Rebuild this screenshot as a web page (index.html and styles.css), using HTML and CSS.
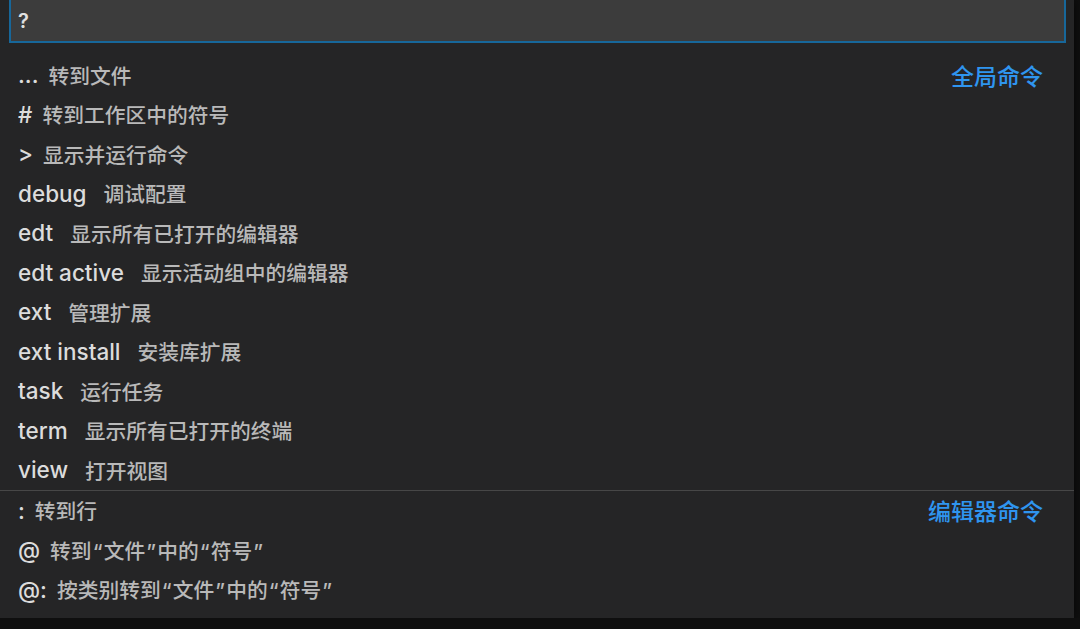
FILE: index.html
```html
<!DOCTYPE html>
<html>
<head>
  <meta charset="UTF-8">
  <link rel="stylesheet" href="styles.css">
</head>
<body>
  <div class="quick-open">
    <div class="input-box">?</div>

    <div class="group">
      <div class="row">
        <span class="label sym">...</span><span class="desc">转到文件</span>
        <span class="group-name">全局命令</span>
      </div>
      <div class="row"><span class="label sym">#</span><span class="desc">转到工作区中的符号</span></div>
      <div class="row"><span class="label sym">&gt;</span><span class="desc">显示并运行命令</span></div>
      <div class="row"><span class="label">debug</span><span class="desc">调试配置</span></div>
      <div class="row"><span class="label">edt</span><span class="desc">显示所有已打开的编辑器</span></div>
      <div class="row"><span class="label">edt active</span><span class="desc">显示活动组中的编辑器</span></div>
      <div class="row"><span class="label">ext</span><span class="desc">管理扩展</span></div>
      <div class="row"><span class="label">ext install</span><span class="desc">安装库扩展</span></div>
      <div class="row"><span class="label">task</span><span class="desc">运行任务</span></div>
      <div class="row"><span class="label">term</span><span class="desc">显示所有已打开的终端</span></div>
      <div class="row"><span class="label">view</span><span class="desc">打开视图</span></div>
    </div>

    <div class="group separated">
      <div class="row">
        <span class="label sym">:</span><span class="desc">转到行</span>
        <span class="group-name">编辑器命令</span>
      </div>
      <div class="row"><span class="label sym">@</span><span class="desc">转到<span class="q">“</span>文件<span class="q">”</span>中的<span class="q">“</span>符号<span class="q">”</span></span></div>
      <div class="row"><span class="label sym">@:</span><span class="desc">按类别转到<span class="q">“</span>文件<span class="q">”</span>中的<span class="q">“</span>符号<span class="q">”</span></span></div>
    </div>
  </div>
</body>
</html>
```

FILE: styles.css
```css
* {
  margin: 0;
  padding: 0;
  box-sizing: border-box;
}

body {
  background: #0f0f0f;
  font-family: Inter, "Noto Sans CJK SC", sans-serif;
  overflow: hidden;
}

.quick-open {
  width: 1074px;
  height: 618px;
  background: #252526;
  box-shadow: 0 0 8px rgba(0, 0, 0, 0.6);
  padding-bottom: 9px;
}

.input-box {
  margin-left: 9px;
  width: 1057px;
  height: 43px;
  background: #3c3c3c;
  border: 2px solid #17679a;
  border-top: none;
  color: #e0e0e0;
  font-size: 20px;
  font-weight: 600;
  padding: 9px 0 0 7px;
}

.group {
  padding-top: 12px;
}

.group.separated {
  margin-top: 0;
  padding-top: 0;
  border-top: 1px solid #474747;
}

.row {
  display: flex;
  align-items: center;
  height: 39.5px;
  padding: 0 31px 0 18px;
}

.label {
  color: #dcdcdc;
  font-size: 22.5px;
  font-weight: 500;
  margin-right: 17px;
}

.label.sym {
  margin-right: 10px;
}

.desc {
  color: #b9b9b9;
  font-family: Inter, "Noto Sans CJK SC", sans-serif;
  font-size: 20.75px;
  font-weight: 500;
}

.q {
  display: inline-block;
  width: 12px;
  text-align: center;
}

.group-name {
  margin-left: auto;
  color: #2f95ef;
  font-family: "Noto Sans CJK SC", sans-serif;
  font-size: 23px;
  font-weight: 500;
}
```
